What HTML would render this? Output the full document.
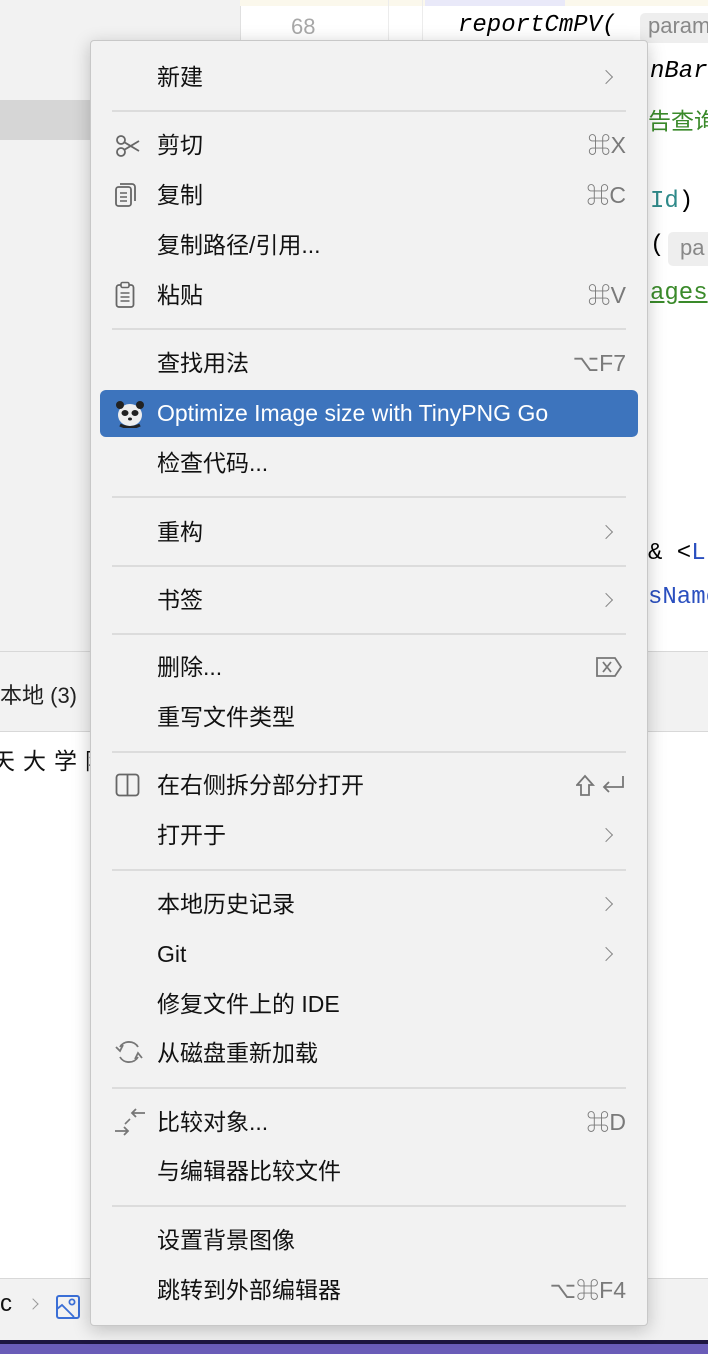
<!DOCTYPE html>
<html><head><meta charset="utf-8">
<style>
*{margin:0;padding:0;box-sizing:border-box}
body{width:708px;height:1354px;overflow:hidden;position:relative;background:#f2f2f2;font-family:"Liberation Sans","Noto Sans CJK SC",sans-serif;color:#000}
.abs{position:absolute;white-space:nowrap}
.code{font-family:"Liberation Mono","DejaVu Sans Mono",monospace;font-size:24px;white-space:nowrap}
#menu{position:absolute;left:90px;top:40px;width:558px;height:1286px;background:#f2f2f2;border:1px solid #c8c8c8;border-radius:4px;box-shadow:0 4px 18px rgba(0,0,0,.22)}
.it{position:absolute;left:66px;font-size:23px;line-height:30px;white-space:nowrap;color:#111}
.sc{position:absolute;right:21px;font-size:23px;line-height:30px;color:#7a7a7a;white-space:nowrap}
.arr{position:absolute;right:36px;width:10px;height:10px;border-right:1.8px solid #888;border-top:1.8px solid #888;transform:rotate(45deg)}
.sep{position:absolute;left:21px;right:21px;height:2px;background:#dcdcdc}
.ic{position:absolute;left:24px}
</style></head><body>
<div class="abs" style="left:0;top:0;width:240px;height:652px;background:#f2f2f2"></div>
<div class="abs" style="left:0;top:100px;width:92px;height:40px;background:#d6d6d6"></div>
<div class="abs" style="left:240px;top:0;width:468px;height:652px;background:#fff;border-left:1px solid #e0e0e0"></div>
<div class="abs" style="left:240px;top:0;width:468px;height:6px;background:#fbf8ec"></div>
<div class="abs" style="left:425px;top:0;width:140px;height:6px;background:#e9e9f9"></div>
<div class="abs" style="left:388px;top:0;width:1px;height:652px;background:#ececec"></div>
<div class="abs" style="left:422px;top:0;width:1px;height:652px;background:#ececec"></div>
<div class="abs code" style="left:291px;top:14px;color:#a8a8a8;font-family:'Liberation Sans',sans-serif;font-size:22px">68</div>
<div class="abs code" style="left:458px;top:12px;font-style:italic">reportCmPV(</div>
<div class="abs" style="left:640px;top:13px;width:80px;height:30px;background:#eee;border-radius:5px;color:#888;font-size:22px;padding-left:8px">param</div>
<div class="abs code" style="left:650px;top:58px;font-style:italic">nBar</div>
<div class="abs" style="left:648px;top:102px;color:#3a8a2a;font-size:23px">告查询</div>
<div class="abs code" style="left:650px;top:188px;color:#2f8a8a">Id<span style="color:#000">)</span></div>
<div class="abs code" style="left:650px;top:232px">(</div>
<div class="abs" style="left:668px;top:232px;width:60px;height:34px;background:#eee;border-radius:5px;color:#888;font-size:22px;padding:3px 0 0 12px">pa</div>
<div class="abs code" style="left:650px;top:280px;color:#3a8a2a;text-decoration:underline">ages</div>
<div class="abs code" style="left:648px;top:540px">&amp; &lt;<span style="color:#2a4fbf">L</span></div>
<div class="abs code" style="left:648px;top:584px;color:#2a4fbf;height:20px;overflow:hidden">sName</div>
<div class="abs" style="left:0;top:651px;width:708px;height:1px;background:#d8d8d8"></div>
<div class="abs" style="left:0;top:652px;width:708px;height:80px;background:#f2f2f2"></div>
<div class="abs" style="left:0;top:678px;font-size:22px;color:#222">本地 (3)</div>
<div class="abs" style="left:0;top:731px;width:708px;height:1px;background:#d8d8d8"></div>
<div class="abs" style="left:0;top:732px;width:708px;height:546px;background:#fff"></div>
<div class="abs" style="left:-8px;top:742px;font-size:23px;letter-spacing:8px;color:#111">天大学附</div>
<div class="abs" style="left:0;top:1278px;width:708px;height:1px;background:#d8d8d8"></div>
<div class="abs" style="left:0;top:1279px;width:708px;height:61px;background:#f2f2f2"></div>
<div class="abs" style="left:0;top:1290px;font-size:24px;color:#111">c</div>
<div class="abs" style="left:29px;top:1300px;width:8px;height:8px;border-right:1.5px solid #999;border-top:1.5px solid #999;transform:rotate(45deg)"></div>
<svg class="abs" style="left:56px;top:1295px" width="24" height="24" viewBox="0 0 24 24"><rect x="1" y="1" width="22" height="22" rx="2" fill="none" stroke="#3b6fd6" stroke-width="2"/><circle cx="16" cy="7" r="2.6" fill="none" stroke="#3b6fd6" stroke-width="1.8"/><path d="M1 14 L6 10 L18 22" fill="none" stroke="#3b6fd6" stroke-width="1.8"/></svg>
<div class="abs" style="left:0;top:1340px;width:708px;height:4px;background:#1d1540"></div>
<div class="abs" style="left:0;top:1344px;width:708px;height:10px;background:#6a5cb8"></div>

<div id="menu">
<div class="it" style="top:21px">新建</div><div class="arr" style="top:31px"></div>
<div class="sep" style="top:69px"></div>

<svg class="ic" style="top:93px" width="26" height="24" viewBox="0 0 26 24"><circle cx="6" cy="6" r="4" fill="none" stroke="#666" stroke-width="1.8"/><circle cx="6" cy="18" r="4" fill="none" stroke="#666" stroke-width="1.8"/><path d="M9 8 L24 17 M9 16 L24 7" stroke="#666" stroke-width="1.8" fill="none"/></svg>
<div class="it" style="top:89px">剪切</div><div class="sc" style="top:89px">⌘X</div>

<svg class="ic" style="top:141px" width="22" height="26" viewBox="0 0 22 26"><rect x="1" y="5" width="15" height="19" rx="2.5" fill="none" stroke="#666" stroke-width="1.8"/><path d="M5 2 H17 a3 3 0 0 1 3 3 V19" fill="none" stroke="#666" stroke-width="1.8"/><path d="M5 11 H12 M5 15 H12 M5 19 H12" stroke="#666" stroke-width="1.6"/></svg>
<div class="it" style="top:139px">复制</div><div class="sc" style="top:139px">⌘C</div>

<div class="it" style="top:189px">复制路径/引用...</div>

<svg class="ic" style="top:240px" width="22" height="28" viewBox="0 0 22 28"><rect x="1.5" y="4" width="17" height="22" rx="2.5" fill="none" stroke="#666" stroke-width="1.8"/><rect x="6" y="1.5" width="8" height="5" rx="1.5" fill="#f2f2f2" stroke="#666" stroke-width="1.6"/><path d="M5.5 12 H14.5 M5.5 16 H14.5 M5.5 20 H14.5" stroke="#666" stroke-width="1.6"/></svg>
<div class="it" style="top:239px">粘贴</div><div class="sc" style="top:239px">⌘V</div>
<div class="sep" style="top:287px"></div>

<div class="it" style="top:307px">查找用法</div><div class="sc" style="top:307px">⌥F7</div>

<div class="abs" style="left:9px;top:349px;width:538px;height:47px;background:#3d74bd;border-radius:6px"></div>
<svg class="ic" style="left:24px;top:359px" width="30" height="28" viewBox="0 0 30 28"><ellipse cx="15" cy="15" rx="12" ry="11" fill="#eee"/><circle cx="5" cy="5" r="4" fill="#222"/><circle cx="25" cy="5" r="4" fill="#222"/><ellipse cx="10" cy="13" rx="3.5" ry="3" fill="#222"/><ellipse cx="20" cy="13" rx="3.5" ry="3" fill="#222"/><ellipse cx="15" cy="19" rx="2" ry="1.5" fill="#222"/><path d="M5 25 Q15 30 25 25" stroke="#222" stroke-width="3" fill="none"/></svg>
<div class="it" style="top:357px;color:#fff">Optimize Image size with TinyPNG Go</div>

<div class="it" style="top:407px">检查代码...</div>
<div class="sep" style="top:455px"></div>

<div class="it" style="top:476px">重构</div><div class="arr" style="top:486px"></div>
<div class="sep" style="top:524px"></div>

<div class="it" style="top:544px">书签</div><div class="arr" style="top:554px"></div>
<div class="sep" style="top:592px"></div>

<div class="it" style="top:611px">删除...</div>
<svg class="abs" style="left:505px;top:616px" width="26" height="20" viewBox="0 0 26 20"><path d="M1 1 H19 L25 10 L19 19 H1 Z" fill="none" stroke="#777" stroke-width="1.8"/><path d="M7 5 L15 15 M15 5 L7 15" stroke="#777" stroke-width="1.8"/></svg>
<div class="it" style="top:661px">重写文件类型</div>
<div class="sep" style="top:710px"></div>

<svg class="ic" style="top:732px" width="26" height="24" viewBox="0 0 26 24"><rect x="1.5" y="1.5" width="22" height="21" rx="3" fill="none" stroke="#666" stroke-width="1.8"/><path d="M12.5 2 V22" stroke="#666" stroke-width="1.8"/></svg>
<div class="it" style="top:729px">在右侧拆分部分打开</div>
<svg class="abs" style="left:485px;top:733px" width="50" height="24" viewBox="0 0 50 24"><path d="M9 2 L17 11 H13 V21 H5 V11 H1 Z" fill="none" stroke="#777" stroke-width="1.8"/><path d="M47 2 V13 H28 M33 8 L28 13 L33 18" fill="none" stroke="#777" stroke-width="1.8"/></svg>
<div class="it" style="top:779px">打开于</div><div class="arr" style="top:789px"></div>
<div class="sep" style="top:828px"></div>

<div class="it" style="top:848px">本地历史记录</div><div class="arr" style="top:858px"></div>
<div class="it" style="top:898px">Git</div><div class="arr" style="top:908px"></div>
<div class="it" style="top:948px">修复文件上的 IDE</div>
<svg class="ic" style="left:22px;top:998px" width="32" height="26" viewBox="0 0 32 26"><path d="M7 8 A10 9 0 0 1 25 8" fill="none" stroke="#777" stroke-width="1.8"/><path d="M25 18 A10 9 0 0 1 7 18" fill="none" stroke="#777" stroke-width="1.8"/><path d="M3 8 L7 12 L10 6" fill="none" stroke="#777" stroke-width="1.8"/><path d="M22 20 L25 14 L29 19" fill="none" stroke="#777" stroke-width="1.8"/></svg>
<div class="it" style="top:997px">从磁盘重新加载</div>
<div class="sep" style="top:1046px"></div>

<svg class="ic" style="left:22px;top:1066px" width="34" height="30" viewBox="0 0 34 30"><path d="M32 6 H19 M23 2 L19 6 L23 10" fill="none" stroke="#777" stroke-width="1.8"/><path d="M2 24 H15 M11 20 L15 24 L11 28" fill="none" stroke="#777" stroke-width="1.8"/><path d="M12 17 L17 12" stroke="#777" stroke-width="1.6"/></svg>
<div class="it" style="top:1066px">比较对象...</div><div class="sc" style="top:1066px">⌘D</div>
<div class="it" style="top:1115px">与编辑器比较文件</div>
<div class="sep" style="top:1164px"></div>

<div class="it" style="top:1184px">设置背景图像</div>
<div class="it" style="top:1234px">跳转到外部编辑器</div><div class="sc" style="top:1234px">⌥⌘F4</div>
</div>
</body></html>
